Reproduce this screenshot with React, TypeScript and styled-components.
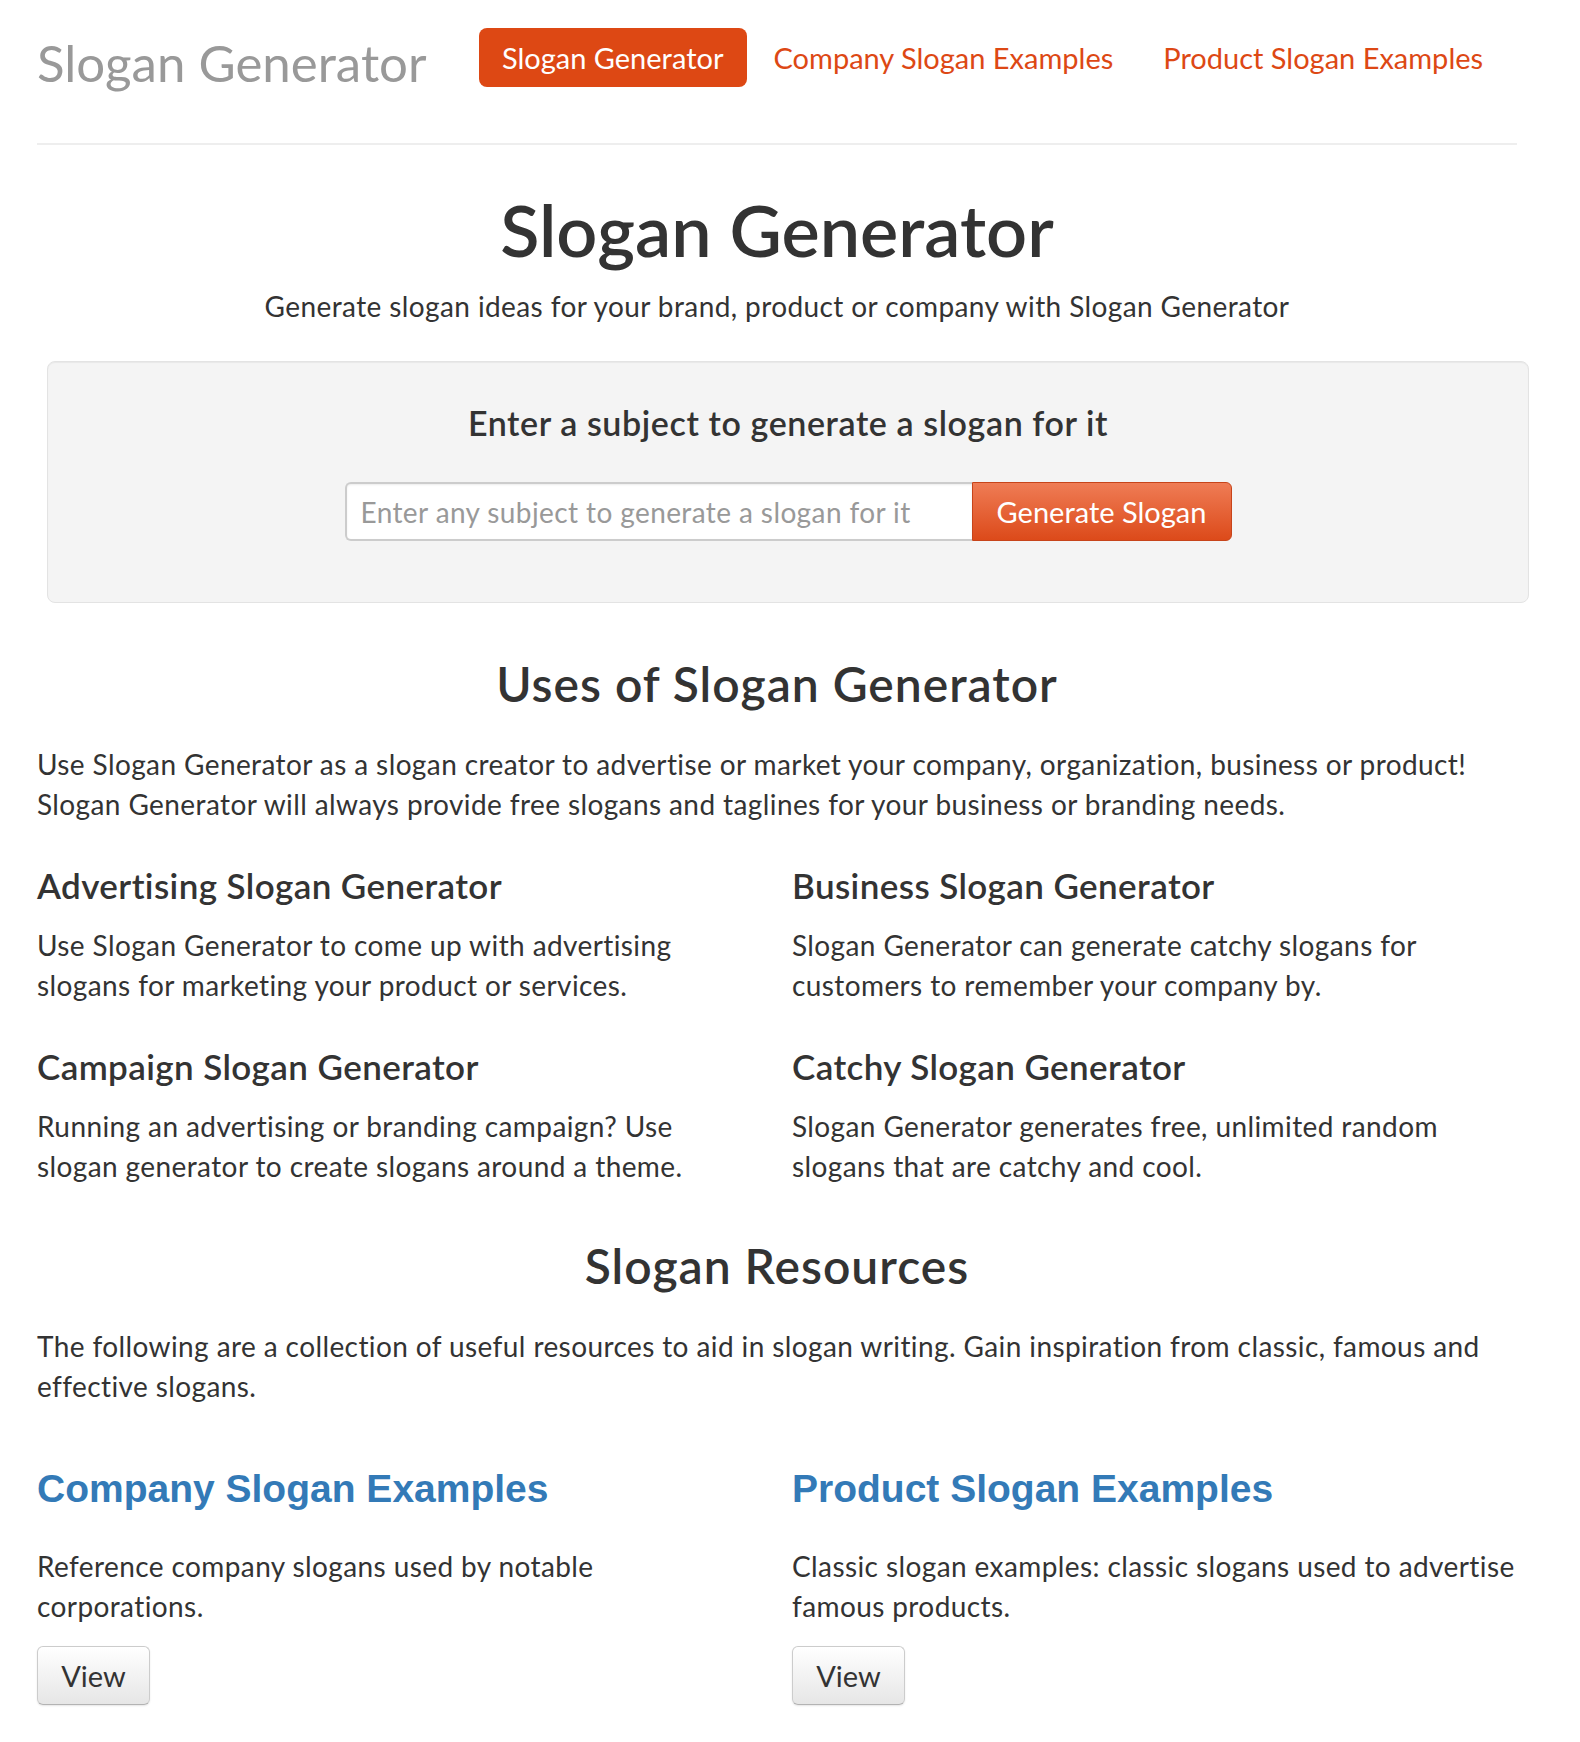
import React from "react";
import styled, { createGlobalStyle } from "styled-components";

const GlobalStyle = createGlobalStyle`
  html, body {
    margin: 0;
    padding: 0;
    background: #fff;
  }
  body {
    font-family: "Lato", "Open Sans", sans-serif;
    color: #333;
  }
`;

const Page = styled.div`
  width: 1480px;
  margin-left: 37px;
  padding-bottom: 36px;
`;

const Header = styled.header`
  display: flex;
  align-items: flex-start;
  height: 115px;
  padding-top: 28px;
  border-bottom: 2px solid #eee;
`;

const Logo = styled.div`
  flex: 0 0 442px;
  margin-top: 10px;
  font-size: 51px;
  line-height: 50px;
  color: #999;
  white-space: nowrap;
`;

const Nav = styled.nav`
  display: flex;
  gap: 4px;
`;

const NavLink = styled.a<{ active?: boolean }>`
  display: block;
  padding: 10px 23px;
  font-size: 29px;
  line-height: 39px;
  border-radius: 8px;
  text-decoration: none;
  white-space: nowrap;
  color: ${(p) => (p.active ? "#fff" : "#dd4814")};
  background: ${(p) => (p.active ? "#dd4814" : "transparent")};
`;

const Title = styled.h1`
  margin: 43px 0 0;
  text-align: center;
  font-size: 72px;
  line-height: 82px;
  font-weight: 600;
  color: #333;
`;

const Lead = styled.p`
  margin: 16px 0 0;
  text-align: center;
  font-size: 28px;
  letter-spacing: 0.4px;
  line-height: 40px;
`;

const Well = styled.div`
  margin: 35px -12px 0 10px;
  padding: 41px 0 61px;
  background: #f4f4f4;
  border: 1px solid #e3e3e3;
  border-radius: 8px;
  box-shadow: inset 0 1px 1px rgba(0, 0, 0, 0.05);
  display: flex;
  flex-direction: column;
  align-items: center;
`;

const WellTitle = styled.h3`
  margin: 0 0 39px;
  font-size: 34px;
  letter-spacing: 0.6px;
  line-height: 40px;
  font-weight: 600;
  color: #333;
`;

const InputGroup = styled.form`
  display: flex;
  height: 59px;
`;

const SubjectInput = styled.input`
  box-sizing: border-box;
  width: 627px;
  height: 59px;
  padding: 0 14px;
  border: 2px solid #ccc;
  border-right: none;
  border-radius: 6px 0 0 6px;
  background: #fff;
  box-shadow: inset 0 1px 2px rgba(0, 0, 0, 0.075);
  font-family: "Lato", "Open Sans", sans-serif;
  font-size: 28px;
  letter-spacing: 0.4px;
  color: #555;
  outline: none;

  &::placeholder {
    color: #999;
  }
`;

const GenerateButton = styled.button`
  box-sizing: border-box;
  width: 260px;
  height: 59px;
  border: 1px solid #c7441a;
  border-radius: 0 6px 6px 0;
  background: linear-gradient(#ef7c55, #dc4a1a);
  color: #fff;
  font-family: "Lato", "Open Sans", sans-serif;
  font-size: 29px;
  cursor: pointer;
`;

const SectionTitle = styled.h2<{ gap: number }>`
  margin: ${(p) => p.gap}px 0 0;
  text-align: center;
  font-size: 48px;
  letter-spacing: 1px;
  line-height: 52px;
  font-weight: 600;
  color: #333;
`;

const Text = styled.p<{ gap: number }>`
  margin: ${(p) => p.gap}px 0 0;
  font-size: 28px;
  letter-spacing: 0.4px;
  line-height: 40px;
`;

const Columns = styled.div<{ gap: number; rowGap?: number }>`
  display: grid;
  grid-template-columns: 1fr 1fr;
  column-gap: 30px;
  row-gap: ${(p) => p.rowGap ?? 0}px;
  margin-top: ${(p) => p.gap}px;
`;

const Feature = styled.div``;

const FeatureTitle = styled.h3`
  margin: 0;
  font-size: 35px;
  letter-spacing: 0.4px;
  line-height: 44px;
  font-weight: 600;
  color: #333;
`;

const ResourceTitle = styled.h2`
  margin: 0;
  font-family: "Liberation Sans", Arial, sans-serif;
  font-size: 39px;
  line-height: 44px;
  font-weight: bold;
  color: #337ab7;
`;

const ViewButton = styled.button`
  box-sizing: border-box;
  display: block;
  margin-top: 20px;
  width: 113px;
  height: 59px;
  border: 1px solid #ccc;
  border-bottom-color: #b3b3b3;
  border-radius: 6px;
  background: linear-gradient(#fff, #e6e6e6);
  box-shadow: 0 1px 2px rgba(0, 0, 0, 0.1);
  color: #333;
  font-family: "Lato", "Open Sans", sans-serif;
  font-size: 29px;
  cursor: pointer;
`;

const features = [
  {
    title: "Advertising Slogan Generator",
    lines: ["Use Slogan Generator to come up with advertising", "slogans for marketing your product or services."],
  },
  {
    title: "Business Slogan Generator",
    lines: ["Slogan Generator can generate catchy slogans for", "customers to remember your company by."],
  },
  {
    title: "Campaign Slogan Generator",
    lines: ["Running an advertising or branding campaign? Use", "slogan generator to create slogans around a theme."],
  },
  {
    title: "Catchy Slogan Generator",
    lines: ["Slogan Generator generates free, unlimited random", "slogans that are catchy and cool."],
  },
];

const resources = [
  {
    title: "Company Slogan Examples",
    lines: ["Reference company slogans used by notable", "corporations."],
  },
  {
    title: "Product Slogan Examples",
    lines: ["Classic slogan examples: classic slogans used to advertise", "famous products."],
  },
];

const Lines: React.FC<{ lines: string[] }> = ({ lines }) => (
  <>
    {lines.map((l, i) => (
      <React.Fragment key={i}>
        {i > 0 && <br />}
        {l}
      </React.Fragment>
    ))}
  </>
);

const App: React.FC = () => {
  return (
    <Page>
      <GlobalStyle />
      <Header>
        <Logo>Slogan Generator</Logo>
        <Nav>
          <NavLink active href="#">
            Slogan Generator
          </NavLink>
          <NavLink href="#">Company Slogan Examples</NavLink>
          <NavLink href="#">Product Slogan Examples</NavLink>
        </Nav>
      </Header>

      <Title>Slogan Generator</Title>
      <Lead>Generate slogan ideas for your brand, product or company with Slogan Generator</Lead>

      <Well>
        <WellTitle>Enter a subject to generate a slogan for it</WellTitle>
        <InputGroup onSubmit={(e) => e.preventDefault()}>
          <SubjectInput type="text" placeholder="Enter any subject to generate a slogan for it" />
          <GenerateButton type="submit">Generate Slogan</GenerateButton>
        </InputGroup>
      </Well>

      <SectionTitle gap={55}>Uses of Slogan Generator</SectionTitle>
      <Text gap={34}>
        <Lines
          lines={[
            "Use Slogan Generator as a slogan creator to advertise or market your company, organization, business or product!",
            "Slogan Generator will always provide free slogans and taglines for your business or branding needs.",
          ]}
        />
      </Text>

      <Columns gap={39} rowGap={39}>
        {features.map((f) => (
          <Feature key={f.title}>
            <FeatureTitle>{f.title}</FeatureTitle>
            <Text gap={18}>
              <Lines lines={f.lines} />
            </Text>
          </Feature>
        ))}
      </Columns>

      <SectionTitle gap={54}>Slogan Resources</SectionTitle>
      <Text gap={34}>
        <Lines
          lines={[
            "The following are a collection of useful resources to aid in slogan writing. Gain inspiration from classic, famous and",
            "effective slogans.",
          ]}
        />
      </Text>

      <Columns gap={61}>
        {resources.map((r) => (
          <Feature key={r.title}>
            <ResourceTitle>{r.title}</ResourceTitle>
            <Text gap={35}>
              <Lines lines={r.lines} />
            </Text>
            <ViewButton>View</ViewButton>
          </Feature>
        ))}
      </Columns>
    </Page>
  );
};

export default App;
